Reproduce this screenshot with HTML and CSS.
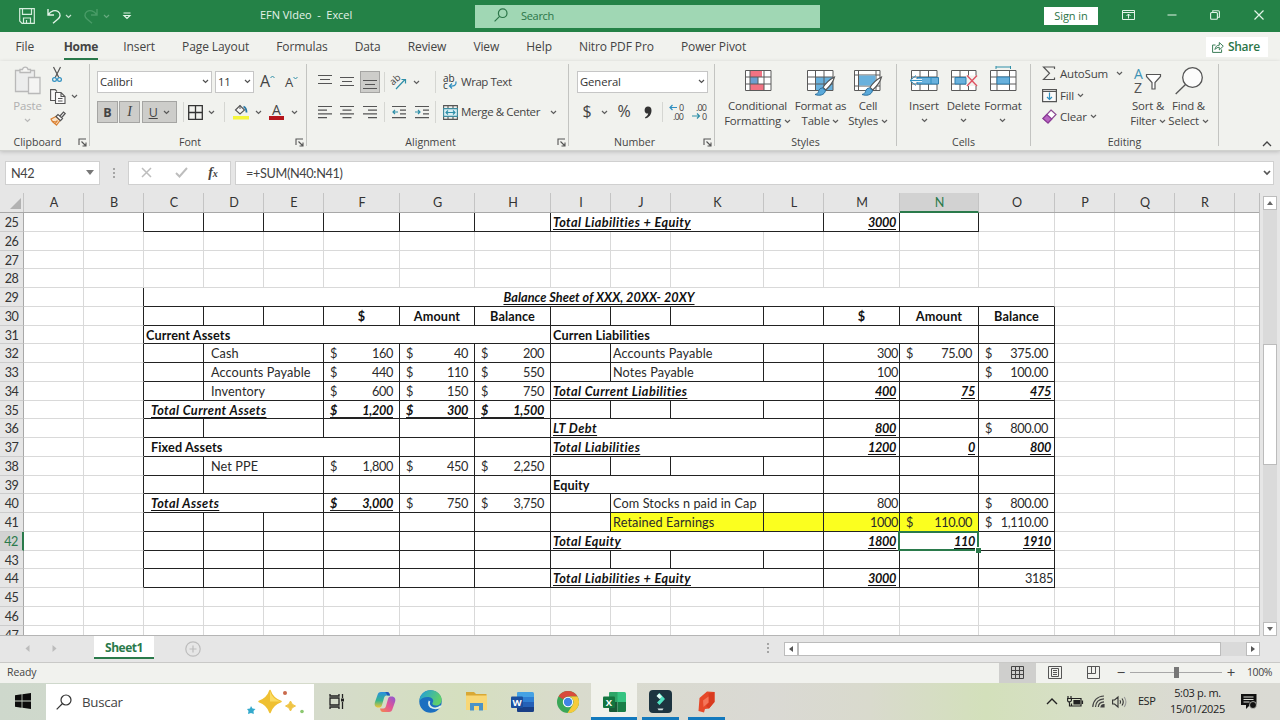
FILE: index.html
```html
<!DOCTYPE html>
<html lang="en">
<head>
    <meta charset="utf-8">
    <title>EFN VIdeo - Excel</title>
    <link rel="stylesheet" href="styles.css">
</head>
<body>
    <svg class="defs">
        <symbol id="chev" viewBox="0 0 7 5"><path d="M1 1l2.500 2.500L6 1" fill="none" stroke="currentColor" stroke-width="1.200"/></symbol>
        <symbol id="launch" viewBox="0 0 9 9"><path d="M1 7V1h7M3.500 3.500l4 4M8 4.500v3.500H4.500" fill="none" stroke="#555" stroke-width="1.100"/></symbol>
        <symbol id="brush" viewBox="0 0 22 20"><path d="M20.500 1c-4 2-9 6.500-11.500 10.500l2.800 2.500C15.500 10.500 19.500 5 20.500 1z" fill="#fff" stroke="#555" stroke-width="1.100"/><path d="M8.500 12c-2.500 0-3.500 1.500-4 3.500-.4 1.500-1.500 2.500-3.500 3 4 1.500 9.500 1 10.500-4z" fill="#5aa9da" stroke="#2a6f9c" stroke-width="1"/></symbol>
    </svg>

    <!-- Title bar -->
    <header class="titlebar">
        <div class="quick">
            <svg width="16" height="16" viewBox="0 0 16 16" fill="none" stroke="#d5eedd" stroke-width="1.200"><path d="M.7.7h14.600v14.600H3L.7 13zM3.500.7v5.600h9V.7M4.500 15.300V10h7v5.300M7.500 12v3"/></svg>
            <svg width="14" height="16" viewBox="0 0 14 16" fill="none" stroke="#e2f4e8" stroke-width="1.400"><path d="M1 1v6h6M1.300 6.700C4 3 8 1.500 11 3.500c3.500 2.500 2 6 0 7.500l-5 4.300"/></svg>
            <svg class="chev"><use href="#chev"/></svg>
            <svg class="faded" width="14" height="16" viewBox="0 0 14 16" fill="none" stroke="#8fcaa3" stroke-width="1.400"><path d="M13 1v6H7M12.700 6.700C10 3 6 1.500 3 3.500c-3.500 2.500-2 6 0 7.500l5 4.300"/></svg>
            <svg class="chev faded"><use href="#chev"/></svg>
            <svg width="8" height="8" viewBox="0 0 8 8" fill="none" stroke="#e2f4e8" stroke-width="1.200"><path d="M.5 1h7M1 3.500h6L4 6.500z"/></svg>
        </div>
        <div class="doc-title">EFN VIdeo &nbsp;- &nbsp;Excel</div>
        <div class="search">
            <svg width="14" height="14" viewBox="0 0 14 14" fill="none" stroke="#2b7548" stroke-width="1.200"><circle cx="8.700" cy="5.200" r="4.300"/><path d="M5.600 8.300L.6 13.300"/></svg>
            <span>Search</span>
        </div>
        <button class="signin">Sign in</button>
        <div class="window-buttons">
            <svg width="13" height="10" viewBox="0 0 13 10" fill="none" stroke="#e2f4e8"><path d="M.5.5h12v9H.5zM.5 2.500h12M6.500 8.500V4M4.500 6l2-2 2 2"/></svg>
            <svg width="10" height="10" viewBox="0 0 10 10" stroke="#e2f4e8"><path d="M.5 5h9"/></svg>
            <svg width="10" height="10" viewBox="0 0 10 10" fill="none" stroke="#e2f4e8" stroke-width="1.100"><rect x=".6" y="2.500" width="6.800" height="6.800" rx="1"/><path d="M2.800 2.300V.7h5.400q1.200 0 1.200 1.200v5.300H7.500"/></svg>
            <svg width="10" height="10" viewBox="0 0 10 10" stroke="#e2f4e8" stroke-width="1.200"><path d="M.5.5l9 9M9.500.5l-9 9"/></svg>
        </div>
    </header>

    <!-- Tabs -->
    <nav class="tabs">
        <span>File</span><span class="active">Home</span><span>Insert</span><span>Page Layout</span><span>Formulas</span><span>Data</span><span>Review</span><span>View</span><span>Help</span><span>Nitro PDF Pro</span><span>Power Pivot</span>
        <button class="share">
            <svg width="12" height="12" viewBox="0 0 12 12" fill="none" stroke="#3b7d57"><path d="M3.500 4H.6v7.400h9V8.500M3 8.500c.3-3 2-4.300 4.300-4.300V1.500l4 3.700-4 3.700V6.300C5.500 6.300 4.200 7 3 8.500z"/></svg>
            Share
        </button>
    </nav>

    <!-- Ribbon -->
    <section class="ribbon">
        <div class="group clipboard">
            <div class="tools">
                <div class="big paste">
                    <svg width="28" height="30" viewBox="0 0 28 30" fill="#eceded" stroke="#b9b9b9" stroke-width="1.300"><path d="M1.500 4.500h19v21h-19z"/><path fill="#f6f6f4" d="M6 6.500v-3h2.500C9 .3 13.500.3 14 3.500h2.500v3z"/><path fill="#f4f4f3" d="M14.500 11.500H26v16H14.500z"/></svg>
                    <span>Paste</span>
                    <svg class="chev"><use href="#chev"/></svg>
                </div>
                <div class="stack">
                    <div><svg width="10" height="16" viewBox="0 0 10 16" fill="none" stroke="#555" stroke-width="1.200"><path d="M1.500 0l5.300 10.500M8.500 0L3.200 10.500"/><g stroke="#2f8fc0"><circle cx="2.500" cy="12.500" r="1.900"/><circle cx="7.500" cy="12.500" r="1.900"/></g></svg></div>
                    <div><svg width="16" height="15" viewBox="0 0 16 15" fill="#fafafa" stroke="#555" stroke-width="1.100"><path d="M5 11.500H.6V.6h4.600L7 2.500"/><path d="M5.500 3.500h5.500l4 4v7H5.500zM11 3.500v4h4M8 9.500h4.500M8 12h4.500"/></svg><svg class="chev"><use href="#chev"/></svg></div>
                    <div><svg width="16" height="15" viewBox="0 0 16 15" stroke-width="1.200"><path d="M1 8l5-2.500 4 4L6.500 14C5 12.500 2 11.500 1 8z" fill="#fbe3c8" stroke="#d98032"/><path d="M3 10.500l4 .5M5 12.500l2.500-3" stroke="#d98032"/><path d="M6 5.500L8 3.500l4.500 4-2 2.200zM10 5l3.500-4 1.700 1.500L11.700 6.500" fill="#fff" stroke="#555"/></svg></div>
                </div>
            </div>
            <div class="label">Clipboard<svg class="launch"><use href="#launch"/></svg></div>
        </div>

        <div class="group font">
            <div class="tools">
                <div class="row font-top">
                    <div class="combo">Calibri<svg class="chev"><use href="#chev"/></svg></div>
                    <div class="combo">11<svg class="chev"><use href="#chev"/></svg></div>
                    <div class="grow">A<svg width="5" height="4" viewBox="0 0 5 4"><path d="M.5 3l2-2 2 2" fill="none" stroke="#2f8fa8"/></svg></div>
                    <div class="grow small">A<svg width="5" height="4" viewBox="0 0 5 4"><path d="M.5 1l2 2 2-2" fill="none" stroke="#2f8fa8"/></svg></div>
                </div>
                <div class="row font-bottom">
                    <div class="pressed"><b>B</b></div>
                    <div class="pressed"><i>I</i></div>
                    <div class="pressed"><u>U</u><svg class="chev"><use href="#chev"/></svg></div>
                    <i class="sep"></i>
                    <svg width="15" height="15" viewBox="0 0 15 15" fill="none" stroke="#333" stroke-width="1.300"><path d="M.7.7h13.600v13.600H.7zM7.500.7v13.600M.7 7.500h13.600"/></svg>
                    <svg class="chev"><use href="#chev"/></svg>
                    <i class="sep"></i>
                    <svg width="16" height="16" viewBox="0 0 16 16"><path d="M2.500 6L7 1.500 11.500 6 7 10z" fill="#f7f7f7" stroke="#555" stroke-width="1.100"/><path d="M7 1.500V5" stroke="#555"/><path d="M10.500 2.500c2 1 3 3 3 6" fill="none" stroke="#2b78a5" stroke-width="1.800"/><path d="M0 12h16v3.500H0z" fill="#f5f53a"/></svg>
                    <svg class="chev"><use href="#chev"/></svg>
                    <div class="font-color">A</div>
                    <svg class="chev"><use href="#chev"/></svg>
                </div>
            </div>
            <div class="label">Font<svg class="launch"><use href="#launch"/></svg></div>
        </div>

        <div class="group align">
            <div class="tools align-grid">
                <div class="row align-left">
                    <svg width="14" height="16" viewBox="0 0 14 16" stroke="#555" stroke-width="1.200"><path d="M0 1.500h14M2 5.500h10M0 9.500h14"/></svg>
                    <svg width="14" height="16" viewBox="0 0 14 16" stroke="#555" stroke-width="1.200"><path d="M0 3.500h14M2 7.500h10M0 11.500h14"/></svg>
                    <div class="pressed"><svg width="14" height="16" viewBox="0 0 14 16" stroke="#555" stroke-width="1.200"><path d="M0 6.500h14M2 10.500h10M0 14.500h14"/></svg></div>
                    <i class="sep"></i>
                    <svg width="16" height="16" viewBox="0 0 16 16"><text x="1" y="9" transform="rotate(-42 5 9)" font-size="9.500" fill="#444">ab</text><path d="M5 15L14 5.500M10.500 5.500H14.500V9.500" fill="none" stroke="#2f8fa8" stroke-width="1.200"/></svg>
                    <svg class="chev"><use href="#chev"/></svg>
                </div>
                <div class="row align-right">
                    <svg width="14" height="16" viewBox="0 0 14 16"><text x="0" y="7.500" font-size="10" fill="#333">ab</text><text x="0" y="15" font-size="10" fill="#333">c</text><path d="M13 7.500c.5 4-2 4.800-6 4.500M9 9.500L6.500 12 9 14.500" fill="none" stroke="#2f8fc0" stroke-width="1.300"/></svg>
                    <span class="t-wrap">Wrap Text</span>
                </div>
                <div class="row align-left second">
                    <svg width="14" height="14" viewBox="0 0 14 14" stroke="#555" stroke-width="1.200"><path d="M0 1.500h14M0 5.200h9M0 8.900h14M0 12.600h9"/></svg>
                    <svg width="14" height="14" viewBox="0 0 14 14" stroke="#555" stroke-width="1.200"><path d="M0 1.500h14M2.500 5.200h9M0 8.900h14M2.500 12.600h9"/></svg>
                    <svg width="14" height="14" viewBox="0 0 14 14" stroke="#555" stroke-width="1.200"><path d="M0 1.500h14M5 5.200h9M0 8.900h14M5 12.600h9"/></svg>
                    <i class="sep"></i>
                    <svg width="14" height="14" viewBox="0 0 14 14" fill="none" stroke="#555" stroke-width="1.200"><path d="M0 1.500h14M8 5.200h6M8 8.900h6M0 12.600h14"/><path d="M6 7H1M3 5L1 7l2 2" stroke="#2f8fa8"/></svg>
                    <svg width="14" height="14" viewBox="0 0 14 14" fill="none" stroke="#555" stroke-width="1.200"><path d="M0 1.500h14M8 5.200h6M8 8.900h6M0 12.600h14"/><path d="M0 7h5M3 5l2 2-2 2" stroke="#2f8fa8"/></svg>
                </div>
                <div class="row align-right second">
                    <svg width="15" height="15" viewBox="0 0 15 15" fill="none" stroke="#555" stroke-width="1.100"><path d="M.6.6h13.800v13.800H.6zM5 .6v3M10 .6v3M5 11.400v3M10 11.400v3"/><path fill="#d9eff4" stroke="#3e8ca0" d="M.6 3.600h13.800v7.800H.6z"/><path stroke="#2f8fa8" d="M3 7.500h9M5 5.500l-2 2 2 2M10 5.500l2 2-2 2"/></svg>
                    <span class="t-merge">Merge &amp; Center</span>
                    <svg class="chev"><use href="#chev"/></svg>
                </div>
            </div>
            <div class="label">Alignment<svg class="launch"><use href="#launch"/></svg></div>
        </div>

        <div class="group number">
            <div class="tools">
                <div class="row"><div class="combo general">General<svg class="chev"><use href="#chev"/></svg></div></div>
                <div class="row number-bottom">
                    <span class="sym">$</span>
                    <svg class="chev"><use href="#chev"/></svg>
                    <span class="sym">%</span>
                    <svg width="8" height="13" viewBox="0 0 8 13"><path d="M4 .5c2.300 0 3.500 1.500 3.500 4C7.500 8.500 5 11.500 1.500 12.500L1 11.300C3 10.500 4 9 4.200 7.600 2 7.800.6 6.500.6 4.200.6 2 2 .5 4 .5z" fill="#333"/></svg>
                    <i class="sep"></i>
                    <svg width="16" height="16" viewBox="0 0 16 16"><text x="10" y="7" font-size="9" fill="#444">0</text><text x="4" y="15.500" font-size="9" fill="#444" textLength="11">.00</text><path d="M8 3.500H1M3.500 1L1 3.500 3.500 6" fill="none" stroke="#2f8fc0" stroke-width="1.200"/></svg>
                    <svg width="16" height="16" viewBox="0 0 16 16"><text x="4" y="7" font-size="9" fill="#444" textLength="11">.00</text><text x="10" y="15.500" font-size="9" fill="#444">0</text><path d="M0 12h7M5 9.500L7.500 12 5 14.500" fill="none" stroke="#2f8fa8" stroke-width="1.200"/></svg>
                </div>
            </div>
            <div class="label">Number<svg class="launch"><use href="#launch"/></svg></div>
        </div>

        <div class="group styles">
            <div class="tools">
                <div class="big">
                    <svg width="28" height="30" viewBox="0 0 28 30"><path d="M1.500 4.500h25.500v20H1.500z" fill="#fff"/><path d="M6 4.500h12v6.500H6zM6 18h14v6.500H6z" fill="#f27383"/><path d="M6 11h8v7H6z" fill="#6d9fd0"/><path d="M1.500 4.500h25.500v20H1.500zM6 4.500v20M14 11v7M20 4.500v20M1.500 11H27M1.500 18H27" fill="none" stroke="#5a5a5a"/></svg>
                    <span>Conditional</span><span>Formatting <svg class="chev"><use href="#chev"/></svg></span>
                </div>
                <div class="big">
                    <svg width="30" height="30" viewBox="0 0 30 30"><path d="M1.500 4.500H27v20H1.500z" fill="#fff"/><path d="M9.500 11H27v13.500H9.500z" fill="#69b1dd"/><path d="M1.500 4.500H27v20H1.500zM9.500 4.500v20M18 4.500v20M1.500 11H27M1.500 18H27" fill="none" stroke="#5a5a5a"/><use href="#brush" x="8" y="10" width="22" height="20"/></svg>
                    <span>Format as</span><span>Table <svg class="chev"><use href="#chev"/></svg></span>
                </div>
                <div class="big">
                    <svg width="30" height="30" viewBox="0 0 30 30"><path d="M1.500 4.500H27v20H1.500z" fill="#fff" stroke="#5a5a5a"/><path d="M5.500 4.500v20M1.500 9H27M1.500 20H27M23 4.500v20" stroke="#5a5a5a"/><path d="M6 9.500h16.500v10H6z" fill="#69b1dd"/><use href="#brush" x="8" y="10" width="22" height="20"/></svg>
                    <span>Cell</span><span>Styles <svg class="chev"><use href="#chev"/></svg></span>
                </div>
            </div>
            <div class="label">Styles</div>
        </div>

        <div class="group cells">
            <div class="tools">
                <div class="big">
                    <svg width="30" height="30" viewBox="0 0 30 30"><path d="M2.500 4.500H28v20H2.500zM11 4.500v20M19.500 4.500v20M2.500 11H28M2.500 18H28" fill="#fff" stroke="#5a5a5a"/><path d="M8 11.500h21.500v6.500H8z" fill="#69b1dd" stroke="#2f7fae"/><path d="M13 14.500H2" stroke="#e9f5fb" stroke-width="3"/><path d="M13 14.500H1M7 9.500l-6 5 6 5M22 11.500V18" fill="none" stroke="#2f8fc0"/></svg>
                    <span>Insert</span><svg class="chev"><use href="#chev"/></svg>
                </div>
                <div class="big">
                    <svg width="30" height="30" viewBox="0 0 30 30"><path d="M2.500 4.500H27v20H2.500zM11 4.500v20M19.500 4.500v20M2.500 11H27M2.500 18H27" fill="#fff" stroke="#5a5a5a"/><path d="M17 9.500h12v10.500H17z" fill="#f1f2ee"/><path d="M6 11.500h11v6.500H6z" fill="#69b1dd" stroke="#2f7fae"/><path d="M18 9.500l10 10.500M28 9.500L18 20" stroke="#df5262" stroke-width="1.400"/></svg>
                    <span>Delete</span><svg class="chev"><use href="#chev"/></svg>
                </div>
                <div class="big">
                    <svg width="28" height="30" viewBox="0 0 28 30"><path d="M1.500 4.500H27v20H1.500zM8 4.500v20M20.500 4.500v20M1.500 11H27M1.500 18H27" fill="#fff" stroke="#5a5a5a"/><path d="M8 11h12.500v7H8z" fill="#69b1dd" stroke="#2f7fae"/><path d="M7 1h15M7 0v3M21.500 0v3" stroke="#2f8fa8"/></svg>
                    <span>Format</span><svg class="chev"><use href="#chev"/></svg>
                </div>
            </div>
            <div class="label">Cells</div>
        </div>

        <div class="group editing">
            <div class="tools">
                <div class="edit-list">
                    <div><svg width="15" height="15" viewBox="0 0 15 15" fill="none" stroke="#555" stroke-width="1.200"><path d="M12.500 3V1H1.500l6 6.300-6 6.200h11v-2"/></svg>AutoSum<svg class="chev far"><use href="#chev"/></svg></div>
                    <div><svg width="15" height="15" viewBox="0 0 15 15" fill="none" stroke="#555" stroke-width="1.200"><path d="M.6 1.600h13.800v12H.6zM.6 3.500h13.800" fill="#fafafa"/><path d="M7.500 4.500v7M5 9l2.500 2.500L10 9" stroke="#2f8fc0"/></svg>Fill<svg class="chev"><use href="#chev"/></svg></div>
                    <div><svg width="15" height="15" viewBox="0 0 15 15" stroke-width="1.200"><path d="M9 1l5 4.500-8 8.500-5-4.500z" fill="#fff" stroke="#8b4a93"/><path d="M4.800 5.500l5 4.500L6 14 1 9.500z" fill="#b865c2" stroke="#8b3b96"/></svg>Clear<svg class="chev"><use href="#chev"/></svg></div>
                </div>
                <div class="big">
                    <svg width="28" height="30" viewBox="0 0 28 30"><text x="0" y="13" font-size="14" fill="#3d93b5">A</text><text x="0" y="27" font-size="14" fill="#555">Z</text><path d="M12.500 8.500h14v2l-5.500 6v6.500h-3v-6.500l-5.500-6z" fill="#fff" stroke="#555" stroke-width="1.200"/></svg>
                    <span>Sort &amp;</span><span>Filter <svg class="chev"><use href="#chev"/></svg></span>
                </div>
                <div class="big">
                    <svg width="28" height="30" viewBox="0 0 28 30" fill="#fcfcfb" stroke="#555" stroke-width="1.300"><circle cx="17.500" cy="11.500" r="9.800"/><path d="M10.500 18.500L.7 28"/></svg>
                    <span>Find &amp;</span><span>Select <svg class="chev"><use href="#chev"/></svg></span>
                </div>
            </div>
            <div class="label">Editing</div>
        </div>
        <svg class="collapse" width="10" height="6" viewBox="0 0 10 6"><path d="M1 5l4-4 4 4" fill="none" stroke="#444" stroke-width="1.300"/></svg>
    </section>

    <!-- Formula bar -->
    <section class="formula-bar">
        <div class="name-box">N42<svg width="8" height="5" viewBox="0 0 8 5"><path d="M0 0h8L4 5z" fill="#777"/></svg></div>
        <div class="dots"><i></i><i></i><i></i></div>
        <div class="fx-box">
            <svg width="11" height="11" viewBox="0 0 11 11" stroke="#bdbdbd" stroke-width="1.500"><path d="M1 1l9 9M10 1l-9 9"/></svg>
            <svg width="13" height="11" viewBox="0 0 13 11" fill="none" stroke="#bdbdbd" stroke-width="1.900"><path d="M1 6l3.500 3.500L12 1"/></svg>
            <span class="fx">f<small>x</small></span>
        </div>
        <div class="formula">=+SUM(N40:N41)<svg width="8" height="6" viewBox="0 0 8 6"><path d="M1 1l3 3 3-3" fill="none" stroke="#555" stroke-width="1.700"/></svg></div>
    </section>

    <!-- Worksheet -->
    <main class="sheet">
        <div class="grid-wrap">
            <div class="col-heads" id="colHeads"></div>
            <div class="grid" id="grid"></div>
        </div>
        <div class="vscroll">
            <div class="arrow"><svg width="6" height="4" viewBox="0 0 6 4"><path d="M0 4h6L3 0z" fill="#666"/></svg></div>
            <div class="track"><div class="thumb"></div></div>
            <div class="arrow"><svg width="6" height="4" viewBox="0 0 6 4"><path d="M0 0h6L3 4z" fill="#666"/></svg></div>
        </div>
    </main>

    <section class="sheet-tabs">
        <div class="tab-nav">
            <svg width="5" height="7" viewBox="0 0 5 7"><path d="M4.500 0v7L.5 3.500z" fill="#bcbcbc"/></svg>
            <svg width="5" height="7" viewBox="0 0 5 7"><path d="M.5 0v7l4-3.500z" fill="#bcbcbc"/></svg>
        </div>
        <div class="sheet-tab">Sheet1</div>
        <svg class="add" width="16" height="16" viewBox="0 0 16 16" fill="none" stroke="#bcbcbc" stroke-width="1.200"><circle cx="8" cy="8" r="7.200"/><path d="M4.500 8h7M8 4.500v7"/></svg>
        <div class="dots"><i></i><i></i><i></i></div>
        <div class="hscroll">
            <div class="arrow"><svg width="4" height="6" viewBox="0 0 4 6"><path d="M4 0v6L0 3z" fill="#555"/></svg></div>
            <div class="thumb"></div>
            <div class="arrow"><svg width="4" height="6" viewBox="0 0 4 6"><path d="M0 0v6l4-3z" fill="#555"/></svg></div>
        </div>
    </section>

    <footer class="status">
        <span>Ready</span>
        <div class="view on"><svg width="13" height="13" viewBox="0 0 13 13" fill="none" stroke="#444"><path d="M.5.5h12v12H.5zM4.500.5v12M8.500.5v12M.5 4.500h12M.5 8.500h12"/></svg></div>
        <div class="view"><svg width="14" height="13" viewBox="0 0 14 13" fill="none" stroke="#555"><path d="M.5.5h13v12H.5zM3.500 2.500h7v8h-7zM5 4.500h4M5 6.500h4M5 8.500h4"/></svg></div>
        <div class="view"><svg width="13" height="13" viewBox="0 0 13 13" fill="none" stroke="#555"><path d="M.5.5h12v12H.5zM4.500.5v7M8.500.5v7M.5 7.500h8"/></svg></div>
        <div class="zoom-bar"><span>−</span><div class="slider"><i></i></div><span>+</span></div>
        <span class="pct">100%</span>
    </footer>

    <!-- Taskbar -->
    <div class="taskbar">
        <div class="start"><svg width="16" height="16" viewBox="0 0 16 16" fill="#0c0c0c"><path d="M0 2.200L6.600 1.300V7.600H0zM7.400 1.200L16 0v7.600H7.400zM0 8.400h6.600v6.300L0 13.800zM7.400 8.400H16V16l-8.600-1.200z"/></svg></div>
        <div class="task-search">
            <svg width="16" height="16" viewBox="0 0 16 16" fill="none" stroke="#333" stroke-width="1.200"><circle cx="10" cy="6" r="5"/><path d="M6.500 9.500L.7 15.300"/></svg>
            <span>Buscar</span>
            <svg width="58" height="26" viewBox="0 0 58 26"><path d="M23 1.500q2.500 8 11 11-8.500 3-11 11-2.500-8-11-11 8.500-3 11-11z" fill="#efc032" stroke="#efc032" stroke-width="1.500" stroke-linejoin="round"/><path d="M23 2q2 8 11 10.500H23z" fill="#fbdc62"/><path d="M43.500 12q1 4 5 5-4 1-5 5-1-4-5-5 4-1 5-5z" fill="#efc445" stroke="#efc445"/><path d="M4 17l1.500 2.500L8.500 20l-2 2 .3 3L4 24l-3 1 .5-3-1.500-2 3-.500z" fill="#33a9cc"/><circle cx="38" cy="4" r="2" fill="#c96a4c"/><circle cx="55" cy="22.500" r="1.800" fill="#8cc870"/></svg>
        </div>
        <div class="app"><svg width="16" height="15" viewBox="0 0 16 15" fill="none" stroke="#222" stroke-width="1.300"><path d="M1 0v2h9V0M1 4h9v7H1zM1 15v-2h9v2M13.500 0v4M13.500 8v7"/><path d="M12 4.500h3v3h-3z" fill="#222" stroke="none"/></svg></div>
        <div class="app"><svg width="22" height="22" viewBox="0 0 22 22"><defs><linearGradient id="cp1" x1="0" y1="0" x2="0" y2="1"><stop offset="0" stop-color="#2a8fe0"/><stop offset=".55" stop-color="#37b58c"/><stop offset="1" stop-color="#f0c534"/></linearGradient><linearGradient id="cp2" x1="1" y1="0" x2="0" y2="1"><stop offset="0" stop-color="#8957d6"/><stop offset=".5" stop-color="#e35595"/><stop offset="1" stop-color="#f58a4c"/></linearGradient></defs><path d="M7 1h6c2 0 2.500 1.500 3 3.500H12.500c-1.500 0-2 1-2.500 2.500L8 14c-.5 2-1.500 2.500-3.500 2.500C1 16.500 0 14 1 11L3.500 4C4 2 5 1 7 1z" fill="url(#cp1)"/><path d="M15 21H9c-2 0-2.500-1.500-3-3.500h3.500c1.500 0 2-1 2.500-2.500L14 8c.5-2 1.500-2.500 3.500-2.500 3.500 0 4.500 2.500 3.500 5.500L18.500 18c-.5 2-1.500 3-3.500 3z" fill="url(#cp2)"/><path d="M11 1h2c2 0 2.500 1.500 3 3.500h-2.500C12.500 2.500 12 1.500 11 1z" fill="#2455b8"/></svg></div>
        <div class="app"><svg width="23" height="23" viewBox="0 0 23 23"><defs><linearGradient id="ed" x1="0" y1="0" x2="1" y2=".4"><stop offset="0" stop-color="#1e9ce0"/><stop offset="1" stop-color="#5fd06a"/></linearGradient></defs><circle cx="11.500" cy="11.500" r="11.200" fill="#1b6fc0"/><path d="M.4 11C1 4.500 5.500.3 11.500.3c6.500 0 11.200 4.700 11.200 9.700 0 3.500-2.700 5.500-5.700 5.500-2.300 0-3.700-1-3.700-2 0-.7.900-1 .9-2.700C14.200 8.500 11.500 7 8.500 7 5 7 2 8.500.4 11z" fill="url(#ed)"/><path d="M10.500 11c-1.500 3 0 6 3.500 7 3 .8 6 0 8-2" fill="none" stroke="#dceee9" stroke-width="1.800"/></svg></div>
        <div class="app"><svg width="21" height="19" viewBox="0 0 21 19"><path d="M0 0h8l2 2h10.500v16H0z" fill="#d9a834"/><path d="M0 3.500h21V18H0z" fill="#f8d775"/><path d="M4 18.500V11h13v7.500h-4V14H8v4.500z" fill="#4b93c7"/></svg></div>
        <div class="app"><svg width="23" height="20" viewBox="0 0 23 20"><path d="M7 0h14.500q1.500 0 1.500 1.500V5H6V1q0-1 1-1z" fill="#45a2e4"/><path d="M6 5h17v5H6z" fill="#2f7fd3"/><path d="M6 10h17v5H6z" fill="#2560b6"/><path d="M6 15h17v3.500q0 1.500-1.500 1.500H7q-1 0-1-1z" fill="#193f86"/><rect y="4.500" width="12" height="11.500" rx="1" fill="#1b4f9e"/><text x="1.500" y="13.800" font-size="9.500" font-weight="bold" fill="#fff">W</text></svg></div>
        <div class="app"><svg width="22" height="22" viewBox="0 0 22 22"><circle cx="11" cy="11" r="11" fill="#3aa757"/><path d="M11 0a11 11 0 0 1 9.500 5.500H11A5.500 5.500 0 0 0 6.200 8.200L1.500 5.500A11 11 0 0 1 11 0z" fill="#d94b3d"/><path d="M20.500 5.500A11 11 0 0 1 10.500 22l5.300-8.200A5.500 5.500 0 0 0 11 5.500z" fill="#f7cb3b"/><circle cx="11" cy="11" r="5.200" fill="#fff"/><circle cx="11" cy="11" r="4.200" fill="#4184e4"/></svg></div>
        <div class="app current"><svg width="23" height="20" viewBox="0 0 23 20"><path d="M7 0h8v10H6V1q0-1 1-1z" fill="#2da567"/><path d="M14.500 0h7q1.500 0 1.500 1.500V10h-8.500z" fill="#35c481"/><path d="M6 10h8.500v10H7q-1 0-1-1z" fill="#195c38"/><path d="M14.500 10H23v8.500q0 1.500-1.500 1.500h-7z" fill="#197e47"/><rect y="4.500" width="12" height="11.500" rx="1" fill="#14753f"/><text x="2.700" y="13.800" font-size="9.500" font-weight="bold" fill="#fff">X</text></svg></div>
        <div class="app open"><svg width="23" height="23" viewBox="0 0 23 23"><rect width="23" height="23" rx="4" fill="#1d3440"/><path d="M8 5.500L10.500 3 16 9l-5.500 6L8 12.500l3.500-3.500z" fill="#50e0c0"/><path d="M7.500 6L10 3.500l3 3-2.500 2.500z" fill="#dff8f2"/><path d="M8.500 18.500h6l-1 1.800h-4z" fill="#cfd9dc"/></svg></div>
        <div class="app open"><svg width="17" height="22" viewBox="0 0 17 22"><path d="M1.500 7L9 .5l7.500.5v10L11 17.500l-4 .5-1 3.500L.5 20z" fill="#e6492a"/><path d="M10.500 2.500L16.500 1v10L11 17.500 8 15l3-3.500z" fill="#d93b20"/><path d="M5 9.500l5.500-4v6L5.500 16z" fill="#f4765a"/></svg></div>
        <div class="tray">
            <svg width="12" height="7" viewBox="0 0 12 7" fill="none" stroke="#222" stroke-width="1.400"><path d="M1 6l5-5 5 5"/></svg>
            <svg width="16" height="11" viewBox="0 0 16 11" fill="none" stroke="#222" stroke-width="1.200"><path d="M5 2.500h9v7.500H4.500V7.500M15.500 4.500v3.500"/><path fill="#222" d="M7 4.500h5.500V8H7z"/><path d="M1 0v2M4 0v2M.6 2.500h3.800v1.800q0 1.500-1.900 1.500T.6 4.300zM2.500 6v4H4"/></svg>
            <svg width="13" height="13" viewBox="0 0 13 13" fill="none" stroke="#444" stroke-width="1.200"><path d="M.8 12C1 5.500 5.500 1.200 12 1M3.500 12C3.800 7 7 4.200 12 3.900M6.300 12C6.500 9 8.500 7 12 6.800"/><path d="M9 12c.2-1.500 1.200-2.500 3-2.500V12z" fill="#333"/></svg>
            <svg width="15" height="12" viewBox="0 0 15 12" fill="none" stroke="#333" stroke-width="1.100"><path d="M.6 4h2L6 1v10L2.600 8h-2zM8 4.200q1.200 1.800 0 3.600M10 2.500q2.500 3.500 0 7"/><path d="M12.200 1q3.500 5 0 10" stroke="#999"/></svg>
            <span class="lang">ESP</span>
            <div class="clock"><span>5:03 p. m.</span><span>15/01/2025</span></div>
            <svg width="16" height="15" viewBox="0 0 16 15"><path d="M0 0h15.500v11H9l-4 4v-4H0z" fill="#111"/><path d="M2.500 3h10M2.500 5.500h10M2.500 8h6" stroke="#dfe0d9"/><circle cx="12" cy="11" r="3.500" fill="#111" stroke="#c9cac4" stroke-width=".8"/></svg>
        </div>
    </div>

    <script src="script.js"></script>
</body>
</html>
```
FILE: styles.css
```css
* {
    box-sizing: border-box;
}

body {
    margin: 0;
    width: 1280px;
    height: 720px;
    overflow: hidden;
    background: #e6e6e6;
    font-family: "Open Sans", "Noto Sans", sans-serif;
    font-size: 11.5px;
    color: #444;
}

svg {
    display: block;
    flex: none;
    overflow: visible;
}

button {
    font: inherit;
    border: none;
    padding: 0;
}

.defs {
    width: 0;
    height: 0;
    position: absolute;
}

.chev {
    width: 7px;
    height: 5px;
    opacity: .85;
}

/* title bar */
.titlebar {
    height: 32px;
    background: #248247;
    color: #e4f3e9;
    display: grid;
    grid-template-columns: 238px 237px 345px 224px 54px 182px;
    align-items: center;
}

.quick {
    display: grid;
    grid-template-columns: 28px 18px 19px 19px 20px 10px;
    align-items: center;
    padding-left: 19px;
}

.faded {
    opacity: .35;
}

.doc-title {
    padding-left: 22px;
    font-size: 11px;
    letter-spacing: -.05px;
    margin-top: -3px;
}

.search {
    height: 23px;
    background: #a0d7b4;
    color: #2b7548;
    display: flex;
    align-items: center;
    gap: 13px;
    padding-left: 19px;
    padding-bottom: 2px;
    font-size: 11px;
    letter-spacing: -.3px;
}

.signin {
    grid-column: 5;
    height: 18px;
    background: #fff;
    color: #2b7548;
    font-size: 11px;
    letter-spacing: -.05px;
    padding-bottom: 2px;
}

.window-buttons {
    display: grid;
    grid-template-columns: repeat(4, 43.4px);
    justify-items: center;
    align-items: center;
    padding-left: 9px;
    margin-top: -2px;
}

/* tabs */
.tabs {
    height: 29px;
    background: #f1f2ee;
    display: flex;
    align-items: center;
    gap: 27.1px;
    padding: 0 12px 0 15.5px;
    font-size: 12px;
    letter-spacing: -.1px;
}

.tabs span {
    line-height: 22px;
    padding: 2px 0 2px;
    white-space: nowrap;
}

.tabs .active {
    font-weight: bold;
    letter-spacing: -.25px;
    padding-bottom: 0;
    margin-left: 2.500px;
    margin-right: -2px;
    border-bottom: 2px solid #2a7a4b;
}

.share {
    margin-left: auto;
    width: 62px;
    height: 20px;
    background: #fff;
    color: #2b7548;
    font-weight: 600;
    display: flex;
    align-items: center;
    gap: 4px;
    padding-left: 6px;
    font-size: 12px;
    letter-spacing: -.3px;
}

/* ribbon */
.ribbon {
    height: 90px;
    background: #f1f2ee;
    display: flex;
    padding-top: 3px;
    border-bottom: 1px solid #d0d1ce;
    box-shadow: 0 1px 4px rgba(0, 0, 0, .18);
    position: relative;
}

.group {
    height: 82px;
    border-right: 1px solid #c3c4c1;
}

.tools {
    height: 69px;
}

.label {
    height: 19px;
    line-height: 19px;
    font-size: 10.6px;
    text-align: center;
    position: relative;
}

.launch {
    position: absolute;
    right: 2px;
    top: 5px;
    width: 9px;
    height: 9px;
}

.row {
    display: grid;
    height: 22px;
    align-items: center;
    justify-items: center;
}

.sep {
    width: 1px;
    height: 20px;
    background: #d5d6d2;
}

.combo {
    width: 100%;
    height: 22px;
    background: #fff;
    border: 1px solid #c6c6c6;
    display: flex;
    justify-content: space-between;
    align-items: center;
    padding: 0 2px 1px;
    font-size: 11.3px;
    color: #333;
    letter-spacing: -.1px;
}

.pressed {
    width: 100%;
    height: 22px;
    background: #cdcdca;
    border: 1px solid #a5a5a3;
    display: flex;
    align-items: center;
    justify-content: space-evenly;
    font-size: 12.5px;
}

.pressed i {
    font-family: "Liberation Serif", serif;
    font-size: 14px;
}

.big {
    display: flex;
    flex-direction: column;
    align-items: center;
    line-height: 15px;
    font-size: 11.4px;
    letter-spacing: -.15px;
    padding-top: 2px;
    white-space: nowrap;
}

.big > svg:first-child {
    margin-bottom: 2px;
}

.big > .chev {
    margin-top: 5px;
}

.big span .chev {
    display: inline-block;
    vertical-align: 1px;
}

.clipboard {
    width: 90px;
}

.clipboard .tools {
    display: flex;
}

.clipboard .label {
    padding-right: 14px;
}

.paste {
    width: 50px;
    padding-left: 5px;
    color: #b0b0b0;
}

.stack div {
    height: 22px;
    display: grid;
    grid-template-columns: 16px 7px;
    gap: 5px;
    align-items: center;
}

.stack div:first-child {
    padding-left: 2px;
    height: 21px;
}

.font {
    width: 217px;
    padding-left: 7px;
}

.font .tools,
.number .tools {
    padding-top: 7px;
}

.font .label {
    margin-left: -7px;
    padding-right: 16px;
}

.font .launch {
    right: 2px;
}

.font-top {
    grid-template-columns: 115px 39px 21px 21px;
    column-gap: 3px;
    margin-bottom: 8px;
}

.grow {
    display: flex;
    font-size: 16px;
    line-height: 18px;
    margin-bottom: 3px;
}

.grow svg {
    margin-top: 3px;
}

.grow.small {
    font-size: 13px;
    margin-bottom: 0;
}

.font-bottom {
    grid-template-columns: 21px 23px 37px 10px 15px 17px 9px 25px 11px 25px 11px;
    justify-content: start;
}

.font-bottom > :nth-child(2) {
    width: 21px;
}

.font-bottom > :nth-child(3) {
    width: 35px;
}

.font-bottom > :nth-child(n+8) {
    margin-left: -2px;
}

.font-color {
    width: 15px;
    height: 16px;
    line-height: 12px;
    font-size: 14px;
    text-align: center;
    border-bottom: 4px solid #b5161c;
}

.align {
    width: 262px;
}

.align-grid {
    display: grid;
    grid-template-columns: 129px 132px;
    grid-template-rows: 22px 22px;
    row-gap: 8px;
    padding-top: 7px;
}

.align-left {
    grid-template-columns: 22px 22px 23px 6px 24px 10px;
    padding-left: 7px;
    border-right: 1px solid #d5d6d2;
}

.align-left .pressed {
    width: 20px;
}

.align-left.second {
    grid-template-columns: 22px 22px 23px 6px 24px 22px;
}

.align-right {
    grid-template-columns: 18px auto 1fr;
    justify-items: start;
    padding-left: 7px;
}

.align-right .chev {
    margin-left: 10px;
}

.align-right span {
    margin-top: -1px;
}

.t-wrap {
    letter-spacing: -.45px;
}

.t-merge {
    letter-spacing: -.4px;
    white-space: nowrap;
}

.align .label {
    padding-right: 14px;
}

.number {
    width: 146px;
}

.number .row {
    padding: 0 6px 0 8px;
    margin-bottom: 8px;
}

.number .number-bottom {
    grid-template-columns: 20px 15px 24px 24px 4px 25px 21px;
    padding: 0;
    padding-left: 8px;
}

.sym {
    font-size: 16px;
    line-height: 18px;
    margin-top: -3px;
}

.number .label {
    padding-right: 14px;
}

.styles {
    width: 182px;
}

.styles .tools,
.cells .tools {
    display: grid;
    grid-template-columns: 85px 41px 54px;
    justify-items: center;
}

.cells {
    width: 134px;
}

.cells .tools {
    grid-template-columns: 54px 25px 54px;
}

.editing {
    width: 188px;
}

.editing .tools {
    display: grid;
    grid-template-columns: 97px 40px 41px;
}

.edit-list {
    padding: 0 0 0 11px;
    letter-spacing: -.2px;
    margin-top: -1px;
}

.edit-list div {
    height: 21.5px;
    display: flex;
    align-items: center;
    gap: 3px;
}

.edit-list .far {
    margin-left: 5px;
}

.collapse {
    margin: 77px 0 0 43px;
}

/* formula bar */
.formula-bar {
    height: 42px;
    display: grid;
    grid-template-columns: 95px 28px 103px 4px 1039px;
    align-items: center;
    padding: 1px 0 0 5px;
    font-size: 12px;
}

.name-box,
.fx-box,
.formula {
    height: 24px;
    background: #fff;
    border: 1px solid #d0d0d0;
    display: flex;
    align-items: center;
    padding: 0 5px;
}

.name-box,
.formula {
    justify-content: space-between;
    font-family: Lato, sans-serif;
    font-size: 12.7px;
}

.name-box {
    letter-spacing: -.4px;
}

.formula {
    grid-column: 5;
    padding-left: 10px;
    padding-right: 2px;
    letter-spacing: -.35px;
}

.fx-box {
    display: grid;
    grid-template-columns: 35px 34px 30px;
    justify-items: center;
    padding: 0;
}

.fx {
    font-family: "Liberation Serif", serif;
    font-style: italic;
    font-weight: bold;
    font-size: 14px;
}

.fx small {
    font-size: 10px;
}

.dots {
    display: grid;
    gap: 2px;
    justify-content: center;
}

.dots i {
    width: 2px;
    height: 2px;
    background: #a5a5a5;
}

/* worksheet */
.sheet {
    height: 443px;
    display: flex;
    font-family: Lato, Carlito, sans-serif;
}

.grid-wrap {
    width: 1260px;
    height: 443px;
    overflow: hidden;
    border-right: 1px solid #bdbdbd;
    border-bottom: 1px solid #b5b5b5;
    flex: none;
}

.col-heads,
.grid {
    display: grid;
    grid-template-columns: 24px 60px 60px 60px 60px 60px 76px 75px 76px 60px 60px 93px 60px 76px 79px 76px 60px 60px 60px 60px;
}

.col-heads {
    height: 20px;
    border-bottom: 1px solid #a8a8a8;
    line-height: 20px;
    text-align: center;
    font-size: 12.6px;
    color: #333;
}

.col-heads div {
    height: 19px;
    border-right: 1px solid #c4c4c4;
    padding-left: 1px;
}

.col-heads .sel {
    height: 20px;
    background: #d2d2d2;
    color: #2a7a4b;
    border-bottom: 2px solid #2a7a4b;
}

.col-heads .corner {
    display: flex;
    justify-content: flex-end;
    padding: 5px 2px 0 0;
}

.grid {
    grid-auto-rows: 18.75px;
    background: #fff;
}

.row-head {
    background: #e6e6e6;
    border-right: 1px solid #a8a8a8;
    border-bottom: 1px solid #cccccc;
    text-align: center;
    line-height: 19px;
    font-size: 12.6px;
    letter-spacing: -.5px;
    color: #333;
}

.row-head.sel {
    background: #d2d2d2;
    color: #2a7a4b;
    border-right: 2px solid #2a7a4b;
}

.cell {
    border-right: 1px solid #d9d9d9;
    border-bottom: 1px solid #d9d9d9;
    line-height: 19px;
    font-size: 12.7px;
    letter-spacing: .1px;
    padding: 0 2px;
    color: #2a2a2a;
    white-space: nowrap;
    min-width: 0;
}

.line {
    border-color: #222;
}

.edge {
    border-right-color: #222;
}

.title-row {
    border-right-color: #d9d9d9;
}

.indent {
    padding-left: 7px;
}

.bold {
    font-weight: bold;
    color: #111;
}

.total {
    font-weight: bold;
    font-style: italic;
    text-decoration: underline;
    text-underline-offset: 2px;
    letter-spacing: .42px;
    color: #111;
}

.title-row.total {
    letter-spacing: .05px;
}

.center {
    text-align: center;
}

.num {
    text-align: right;
    padding-right: 1px;
    letter-spacing: -.35px;
}

.num.total {
    padding-right: 3px;
    letter-spacing: -.35px;
}

.cell.money {
    display: flex;
    justify-content: space-between;
    padding: 0 6px;
    letter-spacing: -.35px;
}

.money.total {
    text-decoration: none;
}

/* accounting underline runs below the sign and the amount */
.money.total span {
    height: 17px;
    border-bottom: 1px solid #222;
}

.money.total span:first-child {
    flex: 1;
}

.yellow {
    background: #fbff1f;
}

/* active cell outline over the grid */
.active-cell {
    position: relative;
}

.active-cell::before {
    content: "";
    position: absolute;
    inset: -1px -1px -1px -2px;
    border: 2px solid #2a7a4b;
}

.active-cell::after {
    content: "";
    position: absolute;
    right: -3px;
    bottom: -3px;
    width: 5px;
    height: 5px;
    background: #2a7a4b;
    border: 1px solid #fff;
    border-width: 1px 0 0 1px;
}

.vscroll {
    width: 14px;
    margin: 3px 0 0 3px;
}

.arrow {
    width: 14px;
    height: 14px;
    background: #fff;
    border: 1px solid #bcbcbc;
    display: flex;
    align-items: center;
    justify-content: center;
    flex: none;
}

.track {
    height: 412px;
    padding-top: 134px;
    background: #dadada;
}

.vscroll .thumb {
    height: 121px;
    background: #fff;
    border: 1px solid #bcbcbc;
}

/* sheet tabs */
.sheet-tabs {
    height: 26px;
    display: grid;
    grid-template-columns: 94px 60px 78px 530px 22px 476px;
}

.tab-nav {
    display: flex;
    gap: 22px;
    padding: 9px 0 0 25px;
}

.sheet-tab {
    height: 23px;
    background: #fff;
    border-bottom: 2px solid #2a7a4b;
    color: #2a7a4b;
    font-weight: bold;
    font-size: 12px;
    letter-spacing: -.45px;
    line-height: 23px;
    text-align: center;
}

.add {
    margin: 5px 0 0 31px;
}

.sheet-tabs .dots {
    grid-column: 5;
    align-content: start;
    justify-content: start;
    padding: 7px 0 0 5px;
}

.hscroll {
    display: flex;
    height: 14px;
    margin-top: 6px;
    background: #dadada;
}

.hscroll .thumb {
    width: 423px;
    background: #fff;
    border: 1px solid #bcbcbc;
    margin-right: 25px;
}

/* status bar */
.status {
    height: 21px;
    background: #f1f2ee;
    border-top: 1px solid #c9c9c7;
    display: grid;
    grid-template-columns: 992px 37px 38px 38px 130px 38px;
    align-items: center;
    padding-left: 7px;
    font-size: 10.5px;
    letter-spacing: -.1px;
}

.status > span {
    margin-top: -2px;
}

.view {
    height: 20px;
    display: flex;
    align-items: center;
    justify-content: center;
    padding-bottom: 2px;
}

.view.on {
    background: #cfcfcd;
}

.zoom-bar {
    display: grid;
    grid-template-columns: 18px 92px 18px;
    align-items: center;
    justify-items: center;
    font-size: 15px;
    line-height: 16px;
    margin-top: -2px;
}

.slider {
    width: 92px;
    height: 1px;
    background: #a8a8a8;
    display: flex;
    align-items: center;
    justify-content: center;
}

.slider i {
    width: 5px;
    height: 11px;
    background: #777;
    flex: none;
}

.pct {
    padding-left: 5px;
    letter-spacing: -.4px;
}

/* taskbar */
.taskbar {
    height: 37px;
    display: flex;
    background: linear-gradient(90deg, #ced8cc 0, #d5dbcb 25%, #d5dfbf 36%, #d9dbcd 45%, #dad9d4 60%, #d9dacd 68%, #d3e0bb 77%, #d7dfc6 84%, #dadad2 92%, #dadad4 100%);
}

.start {
    width: 46px;
    padding: 10px 0 0 15px;
}

.task-search {
    width: 268px;
    height: 36px;
    margin-top: 1px;
    background: #fff;
    display: flex;
    align-items: center;
    gap: 10px;
    padding: 0 9px 1px 10px;
    font-size: 13.3px;
    letter-spacing: -.25px;
}

.task-search svg:last-child {
    margin-left: auto;
}

.app {
    width: 45.8px;
    display: flex;
    align-items: center;
    justify-content: center;
    flex: none;
}

.task-search + .app {
    margin-right: 2.500px;
}

.app.current {
    background: #f1f2ec;
    border-bottom: 3px solid #1379bd;
    padding-top: 3px;
}

.app.open {
    width: 37px;
    margin: 0 4.500px;
    border-bottom: 3px solid #1379bd;
    padding-top: 3px;
}

.tray {
    flex: 1;
    display: grid;
    grid-template-columns: 21px 25px 20px 26px 32px 71px 17px;
    justify-content: end;
    align-items: center;
    padding-right: 22px;
    color: #222;
}

.lang {
    font-size: 11px;
    letter-spacing: -.5px;
    margin-top: -2px;
}

.clock {
    display: grid;
    width: 55px;
    justify-items: center;
    font-size: 11px;
    line-height: 16px;
    letter-spacing: -.35px;
    white-space: nowrap;
    margin-top: -2px;
}
```
FILE: script.js
```js
const LETTERS = 'ABCDEFGHIJKLMNOPQR';
const FIRST_ROW = 25;
const LAST_ROW = 47;

// "C:E" => merged range, value => [text, classes]
const rows = {
    25: { 'I:L': ['Total Liabilities + Equity', 'total'], M: ['3000', 'num total'] },
    29: { 'C:O': ['Balance Sheet of XXX, 20XX- 20XY', 'total center title-row'] },
    30: { F: ['$', 'bold center'], G: ['Amount', 'bold center'], H: ['Balance', 'bold center'], M: ['$', 'bold center'], N: ['Amount', 'bold center'], O: ['Balance', 'bold center'] },
    31: { 'C:H': ['Current Assets', 'bold'], 'I:N': ['Curren Liabilities', 'bold'] },
    32: { 'D:E': ['Cash', 'indent'], F: ['$|160'], G: ['$|40'], H: ['$|200'], 'J:K': ['Accounts Payable'], M: ['300', 'num'], N: ['$|75.00'], O: ['$|375.00'] },
    33: { 'D:E': ['Accounts Payable', 'indent'], F: ['$|440'], G: ['$|110'], H: ['$|550'], 'J:K': ['Notes Payable'], M: ['100', 'num'], O: ['$|100.00'] },
    34: { 'D:E': ['Inventory', 'indent'], F: ['$|600'], G: ['$|150'], H: ['$|750'], 'I:L': ['Total Current Liabilities', 'total'], M: ['400', 'num total'], N: ['75', 'num total'], O: ['475', 'num total'] },
    35: { 'C:E': ['Total Current Assets', 'total indent'], F: ['$|1,200', 'total'], G: ['$|300', 'total'], H: ['$|1,500', 'total'] },
    36: { 'D:E': [''], 'I:L': ['LT Debt', 'total'], M: ['800', 'num total'], O: ['$|800.00'] },
    37: { 'C:F': ['Fixed Assets', 'bold indent'], 'I:L': ['Total Liabilities', 'total'], M: ['1200', 'num total'], N: ['0', 'num total'], O: ['800', 'num total'] },
    38: { 'D:E': ['Net PPE', 'indent'], F: ['$|1,800'], G: ['$|450'], H: ['$|2,250'] },
    39: { 'D:E': [''], 'I:L': ['Equity', 'bold'] },
    40: { 'C:E': ['Total Assets', 'total indent'], F: ['$|3,000', 'total'], G: ['$|750'], H: ['$|3,750'], 'J:K': ['Com Stocks n paid in Cap'], M: ['800', 'num'], O: ['$|800.00'] },
    41: { 'J:K': ['Retained Earnings', 'yellow'], L: ['', 'yellow'], M: ['1000', 'num yellow'], N: ['$|110.00', 'yellow'], O: ['$|1,110.00'] },
    42: { 'I:L': ['Total Equity', 'total'], M: ['1800', 'num total'], N: ['110', 'num total active-cell'], O: ['1910', 'num total'] },
    44: { 'I:L': ['Total Liabilities + Equity', 'total'], M: ['3000', 'num total'], O: ['3185', 'num'] }
};

function hasBorder(row, col) {
    if (row === 25) return col >= 2 && col <= 13;
    return row >= 29 && row <= 44 && col >= 2 && col <= 14;
}

// Column headings
let heads = '<div class="corner"><svg width="11" height="11"><path d="M11 0v11H0z" fill="#b2b2b2"/></svg></div>';
for (const l of LETTERS) {
    heads += `<div class="${l === 'N' ? 'sel' : ''}">${l}</div>`;
}
document.getElementById('colHeads').innerHTML = heads + '<div></div>';

// Cells
let html = '';
for (let r = FIRST_ROW; r <= LAST_ROW; r++) {
    html += `<div class="row-head ${r === 42 ? 'sel' : ''}">${r}</div>`;
    const data = rows[r] || {};
    for (let c = 0; c <= LETTERS.length; c++) {
        const key = Object.keys(data).find(k => k[0] === LETTERS[c]);
        const [text, extra] = key ? data[key] : ['', ''];
        const span = key && key.length > 1 ? LETTERS.indexOf(key[2]) - c + 1 : 1;
        let cls = 'cell ' + (extra || '');
        if (hasBorder(r, c)) cls += ' line';
        else if (hasBorder(r, c + 1)) cls += ' edge';
        let body = text;
        if (text.includes('|')) {
            cls += ' money';
            body = text.split('|').map(t => `<span>${t}</span>`).join('');
        }
        html += `<div class="${cls}" style="grid-column: span ${span}">${body}</div>`;
        c += span - 1;
    }
}
document.getElementById('grid').innerHTML = html;
```
